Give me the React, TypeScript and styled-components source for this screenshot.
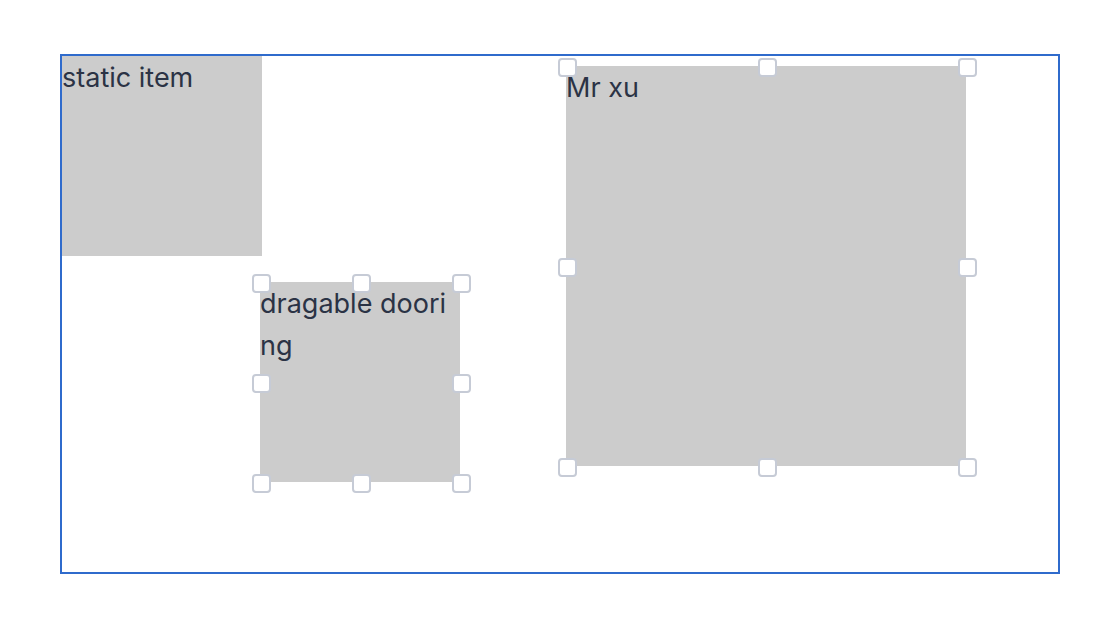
import React, { FC } from 'react';
import styled, { createGlobalStyle } from 'styled-components';

type Pos = 'start' | 'mid' | 'end';

interface Item {
  id: string;
  text: string;
  x: number;
  y: number;
  size: number;
  active: boolean;
}

const items: Item[] = [
  { id: 'static', text: 'static item', x: 0, y: 0, size: 200, active: false },
  { id: 'drag', text: 'dragable dooring', x: 198, y: 226, size: 200, active: true },
  { id: 'xu', text: 'Mr xu', x: 504, y: 10, size: 400, active: true },
];

const handles: [Pos, Pos][] = [
  ['start', 'start'],
  ['mid', 'start'],
  ['end', 'start'],
  ['start', 'mid'],
  ['end', 'mid'],
  ['start', 'end'],
  ['mid', 'end'],
  ['end', 'end'],
];

const App: FC = () => {
  return (
    <>
      <GlobalStyle />
      <Canvas>
        {items.map(({ id, text, x, y, size, active }) => (
          <Block key={id} style={{ left: x, top: y, width: size, height: size }}>
            <Label>{text}</Label>
            {active &&
              handles.map(([hx, hy]) => <Handle key={hx + hy} $x={hx} $y={hy} />)}
          </Block>
        ))}
      </Canvas>
    </>
  );
};

export default App;

const GlobalStyle = createGlobalStyle`
  body {
    margin: 0;
    background: #fff;
    font-family: Inter, "Liberation Sans", sans-serif;
  }
`;

const Canvas = styled.div`
  position: relative;
  box-sizing: border-box;
  width: 1000px;
  height: 520px;
  margin: 54px 0 0 60px;
  border: 2px solid #2f6bcc;
`;

const Block = styled.div`
  position: absolute;
  background-color: #cccccc;
`;

const Label = styled.div`
  padding-top: 1px;
  font-size: 27px;
  line-height: 42px;
  color: #2b3345;
  word-break: break-all;
`;

const offset = (p: Pos) =>
  p === 'start' ? '-8px' : p === 'mid' ? 'calc(50% - 8px)' : 'calc(100% - 8px)';

const Handle = styled.div<{ $x: Pos; $y: Pos }>`
  position: absolute;
  left: ${({ $x }) => offset($x)};
  top: ${({ $y }) => offset($y)};
  box-sizing: border-box;
  width: 19px;
  height: 19px;
  background-color: #fff;
  border: 2px solid #c6cbd6;
  border-radius: 4px;
`;
